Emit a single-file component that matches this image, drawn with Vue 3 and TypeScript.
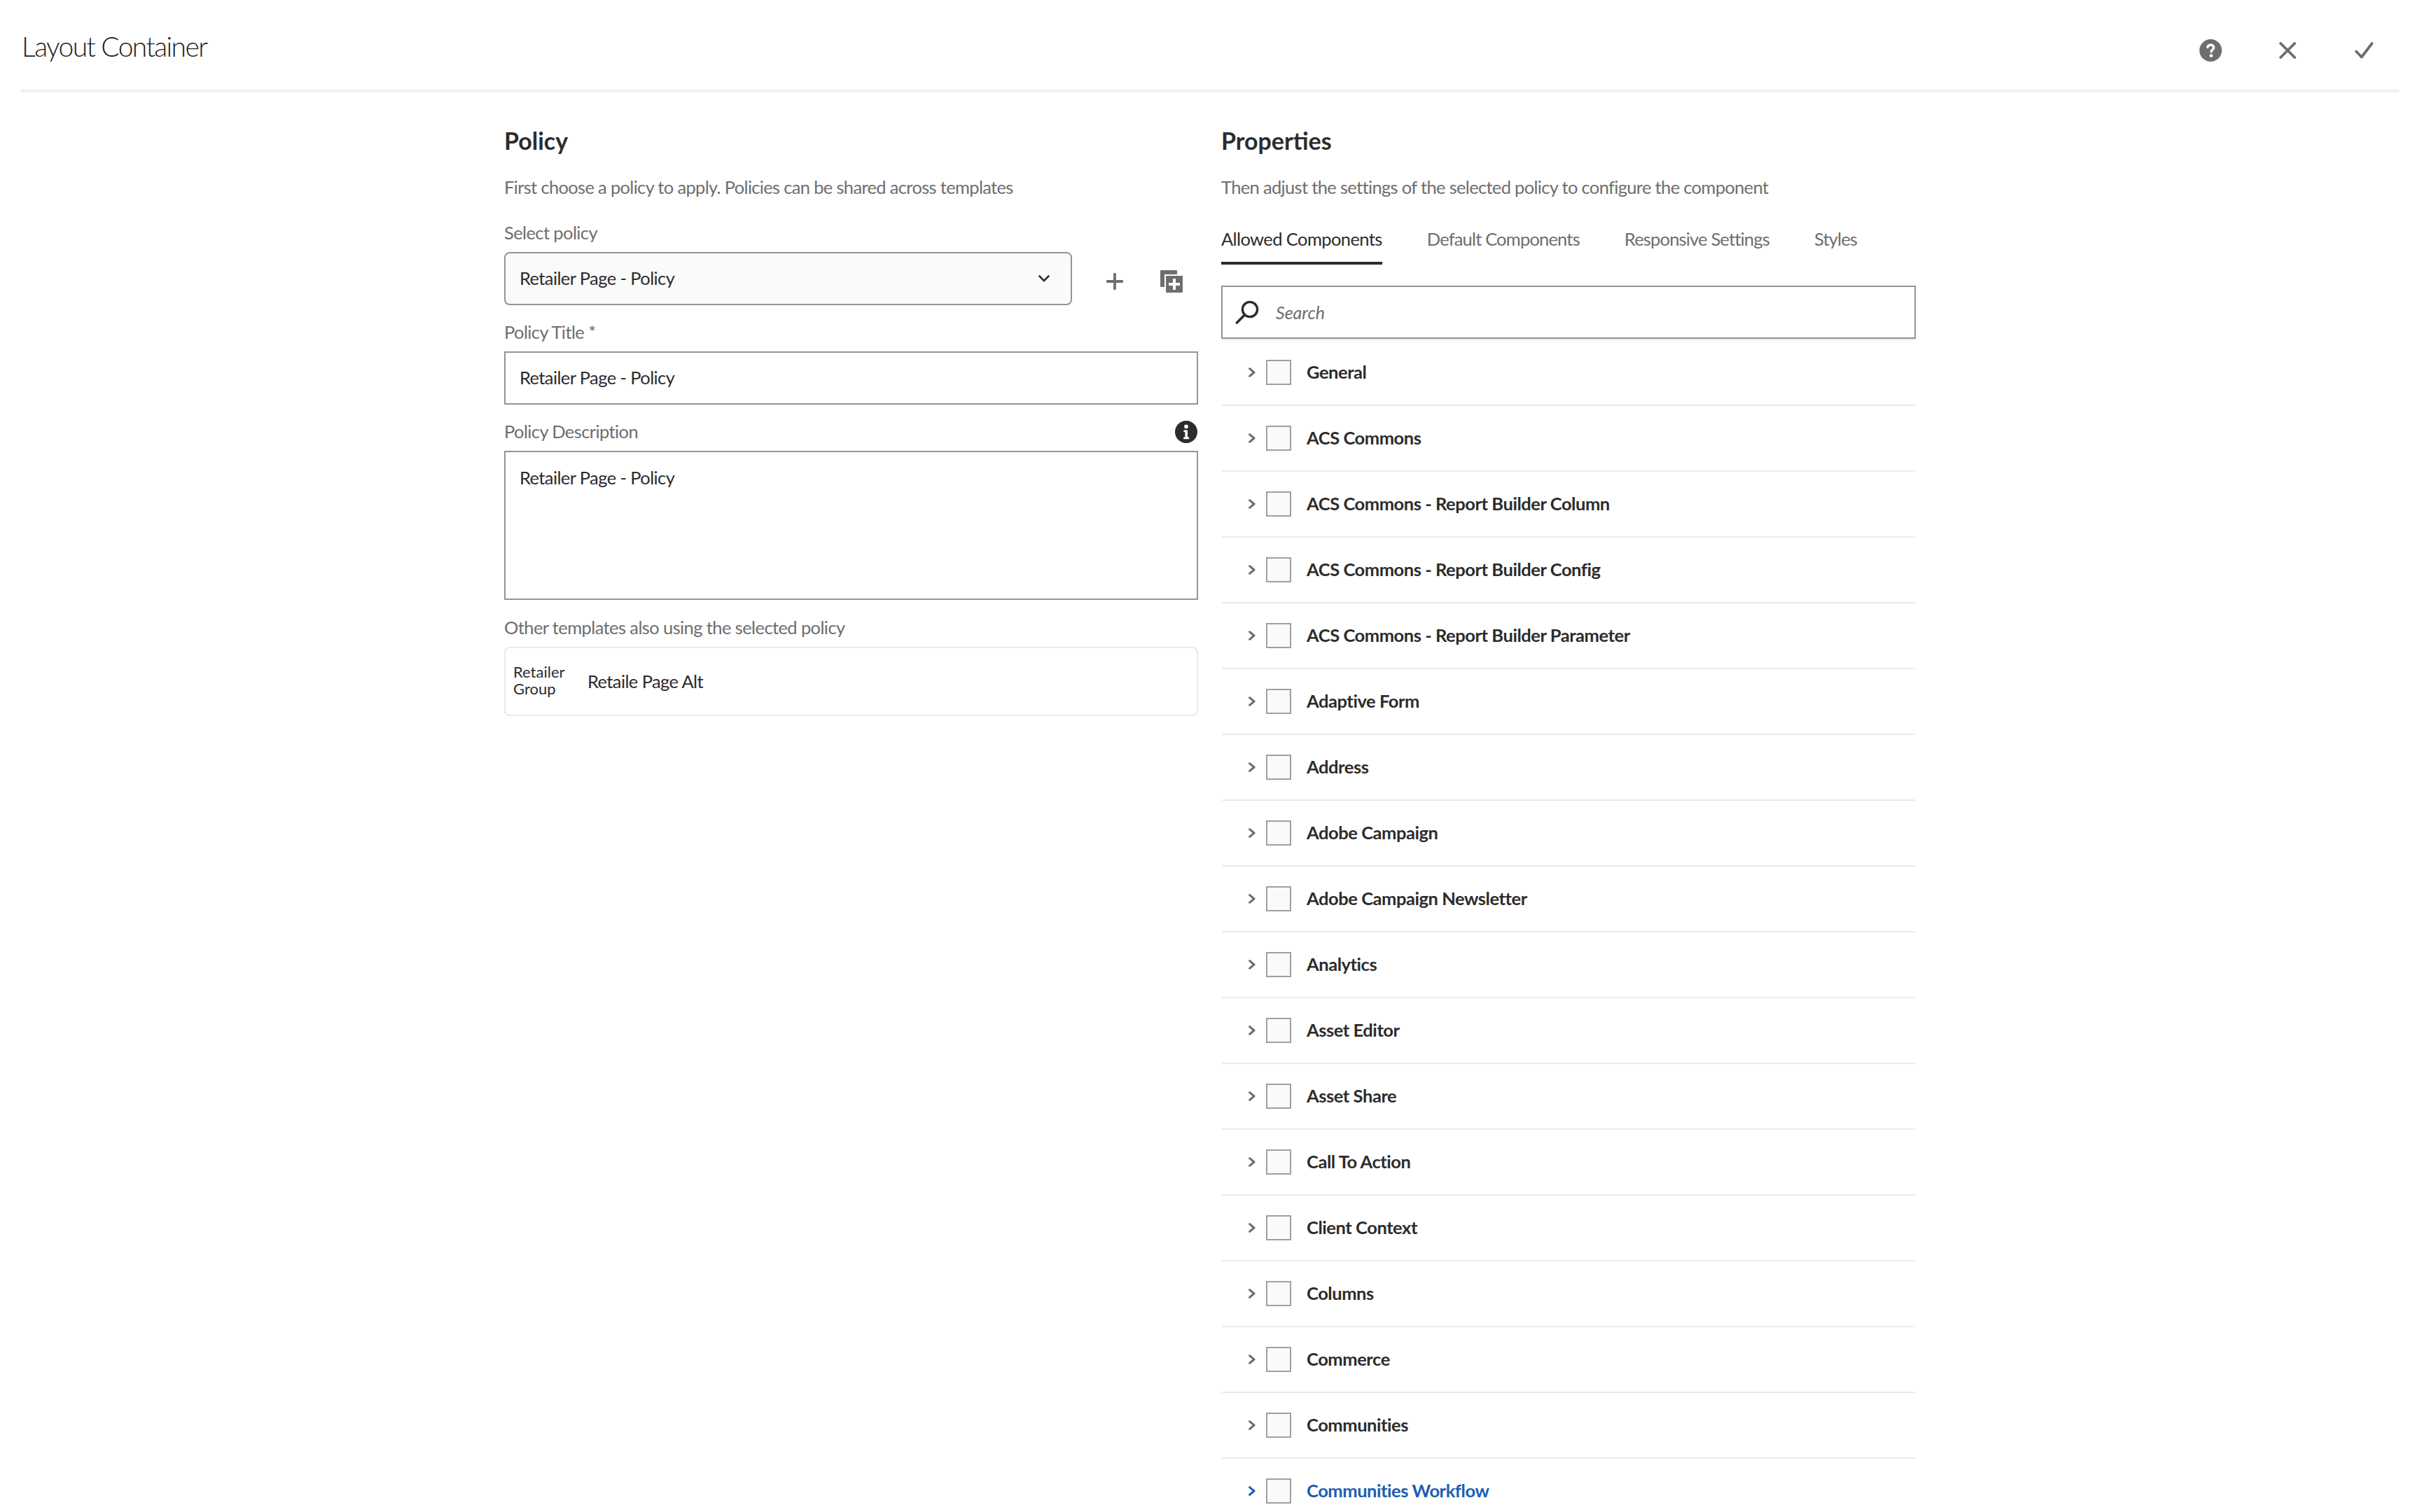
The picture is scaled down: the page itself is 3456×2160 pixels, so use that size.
<script setup lang="ts">
const tabs: string[] = ['Allowed Components', 'Default Components', 'Responsive Settings', 'Styles']
const groups: string[] = [
  'General', 'ACS Commons', 'ACS Commons - Report Builder Column', 'ACS Commons - Report Builder Config',
  'ACS Commons - Report Builder Parameter', 'Adaptive Form', 'Address', 'Adobe Campaign',
  'Adobe Campaign Newsletter', 'Analytics', 'Asset Editor', 'Asset Share', 'Call To Action',
  'Client Context', 'Columns', 'Commerce', 'Communities', 'Communities Workflow'
]
</script>

<template>
  <div class="page">
    <header class="topbar">
      <h1 class="title">Layout Container</h1>
      <div class="actions">
        <svg class="ic-help" viewBox="0 0 32 32" aria-label="Help">
          <circle cx="16" cy="16" r="16" fill="#6e6e6e" />
          <path d="M11.6 11.6c.4-2.2 2.2-3.4 4.5-3.4 2.6 0 4.4 1.5 4.4 3.7 0 3-3.6 3.2-3.6 6" fill="none" stroke="#fff" stroke-width="3.4" stroke-linecap="round" />
          <circle cx="16.8" cy="23.6" r="2.4" fill="#fff" />
        </svg>
        <svg class="ic-close" viewBox="0 0 24 24" aria-label="Close">
          <path d="M2 2l20 20M22 2L2 22" fill="none" stroke="#6e6e6e" stroke-width="3.8" stroke-linecap="round" />
        </svg>
        <svg class="ic-check" viewBox="0 0 26 24" aria-label="Done">
          <path d="M2 13.5l7.6 8L24.5 2" fill="none" stroke="#6e6e6e" stroke-width="3.8" stroke-linecap="round" stroke-linejoin="round" />
        </svg>
      </div>
    </header>

    <main class="columns">
      <section class="col">
        <h2 class="heading">Policy</h2>
        <p class="desc">First choose a policy to apply. Policies can be shared across templates</p>

        <div class="label first-label">Select policy</div>
        <div class="select-row">
          <div class="select">
            <span class="value">Retailer Page - Policy</span>
            <svg class="ic-down" viewBox="0 0 16 10">
              <path d="M1.5 1.5L8 8.2l6.5-6.7" fill="none" stroke="#2c2c2c" stroke-width="2.6" stroke-linecap="round" stroke-linejoin="round" />
            </svg>
          </div>
          <svg class="ic-plus" viewBox="0 0 24 24" aria-label="Add">
            <path d="M12 1.5v21M1.5 12h21" fill="none" stroke="#6e6e6e" stroke-width="3.8" stroke-linecap="round" />
          </svg>
          <svg class="ic-copy" viewBox="0 0 32 32" aria-label="Duplicate">
            <path d="M1 0h22a1 1 0 0 1 1 1v5H7a1 1 0 0 0-1 1v17H1a1 1 0 0 1-1-1V1a1 1 0 0 1 1-1z" fill="#6e6e6e" />
            <rect x="8" y="8" width="24" height="24" rx="1" fill="#6e6e6e" />
            <path d="M20 12v16M12 20h16" stroke="#fff" stroke-width="4" fill="none" />
          </svg>
        </div>

        <div class="label">Policy Title *</div>
        <div class="field"><span class="value">Retailer Page - Policy</span></div>

        <div class="label label-row">
          <span>Policy Description</span>
          <svg class="ic-info" viewBox="0 0 32 32" aria-label="Info">
            <circle cx="16" cy="16" r="16" fill="#2c2c2c" />
            <circle cx="16" cy="8.4" r="2.8" fill="#fff" />
            <path d="M12.4 13.4h5.6v10h2.2v2.8h-8v-2.8h2.2v-7.2h-2z" fill="#fff" />
          </svg>
        </div>
        <div class="field area"><span class="value">Retailer Page - Policy</span></div>

        <div class="label other-label">Other templates also using the selected policy</div>
        <div class="template-card">
          <div class="group-name">Retailer<br />Group</div>
          <div class="template-name">Retaile Page Alt</div>
        </div>
      </section>

      <section class="col">
        <h2 class="heading">Properties</h2>
        <p class="desc">Then adjust the settings of the selected policy to configure the component</p>

        <nav class="tabs">
          <span v-for="(t, i) in tabs" :key="t" class="tab" :class="{ active: i === 0 }">{{ t }}</span>
        </nav>

        <div class="search">
          <svg class="ic-search" viewBox="0 0 34 34">
            <circle cx="21" cy="13" r="10.6" fill="none" stroke="#2c2c2c" stroke-width="3.4" />
            <path d="M13.4 21L2.4 32" fill="none" stroke="#2c2c2c" stroke-width="3.6" stroke-linecap="round" />
          </svg>
          <span class="placeholder">Search</span>
        </div>

        <ul class="list">
          <li v-for="g in groups" :key="g" class="row" :class="{ hover: g === 'Communities Workflow' }">
            <svg class="ic-right" viewBox="0 0 10 14">
              <path d="M1.6 1.6L8 7l-6.4 5.4" fill="none" stroke="currentColor" stroke-width="3" stroke-linecap="round" stroke-linejoin="round" />
            </svg>
            <span class="box"></span>
            <span class="row-label">{{ g }}</span>
          </li>
        </ul>
      </section>
    </main>
  </div>
</template>

<style>
html, body { margin: 0; overflow: hidden; background: #fff; }
</style>

<style scoped>
.page {
  width: 3456px;
  height: 2160px;
  overflow: hidden;
  background: #fff;
  font-family: Lato, "Noto Sans", sans-serif;
  color: #2c2c2c;
}
.topbar {
  height: 128px;
  margin: 0 30px;
  border-bottom: 4px solid #f0f0f0;
  display: flex;
  align-items: center;
  justify-content: space-between;
}
.title {
  margin: 4px 0 0;
  font-size: 39px;
  font-weight: 300;
  line-height: 48px;
  letter-spacing: -1.6px;
  color: #222;
  padding-left: 1px;
}
.actions { display: flex; align-items: center; margin: 16px 37px 0 0; }
.ic-help { width: 32px; height: 32px; }
.ic-close { width: 24px; height: 24px; margin-left: 82px; }
.ic-check { width: 26px; height: 24px; margin-left: 84px; }

.columns { display: flex; gap: 33px; padding-left: 720px; }
.col { width: 991px; flex: none; }
.col + .col { width: 992px; }
.heading { margin: 49px 0 0; font-size: 34px; line-height: 40px; font-weight: 700; color: #2c2c2c; }
.desc { margin: 30px 0 0; font-size: 25.5px; line-height: 32px; letter-spacing: -0.67px; color: #6e6e6e; }
.label { margin-top: 22px; font-size: 25.5px; line-height: 32px; letter-spacing: -0.6px; color: #6e6e6e; }
.first-label { margin-top: 33px; }
.other-label { margin-top: 23px; padding-bottom: 1px; }
.label-row { display: flex; justify-content: space-between; align-items: center; padding-right: 1px; }
.ic-info { width: 32px; height: 32px; transform: translateY(1px); }

.select-row { display: flex; align-items: center; margin-top: 12px; }
.select {
  box-sizing: border-box;
  width: 811px;
  height: 76px;
  padding: 0 20px;
  display: flex;
  align-items: center;
  justify-content: space-between;
  background: #fafafa;
  border: 2px solid #959595;
  border-radius: 8px;
}
.ic-down { width: 16px; height: 10px; margin-right: 10px; }
.ic-plus { width: 24px; height: 24px; margin: 8px 0 0 49px; }
.ic-copy { width: 32px; height: 32px; margin: 8px 0 0 53px; }
.field {
  box-sizing: border-box;
  height: 76px;
  margin-top: 12px;
  padding: 0 20px;
  display: flex;
  align-items: center;
  border: 2px solid #959595;
}
.area { height: 213px; align-items: flex-start; padding-top: 20px; }
.value { margin-bottom: 2px; font-size: 25.5px; line-height: 32px; letter-spacing: -0.6px; color: #2c2c2c; }
.template-card {
  box-sizing: border-box;
  height: 99px;
  margin-top: 11px;
  padding: 0 11px;
  display: flex;
  align-items: center;
  border: 2px solid #eaeaea;
  border-radius: 8px;
}
.group-name { width: 106px; margin-bottom: 3px; font-size: 22px; line-height: 24px; color: #2c2c2c; }
.template-name { margin-bottom: 2px; font-size: 25.5px; line-height: 32px; letter-spacing: -0.6px; color: #2c2c2c; }

.tabs { display: flex; gap: 64px; margin-top: 42px; }
.tab { padding-bottom: 17px; font-size: 25.5px; line-height: 32px; letter-spacing: -0.82px; color: #6e6e6e; border-bottom: 4px solid transparent; }
.tab.active { color: #2c2c2c; border-bottom-color: #2c2c2c; letter-spacing: -0.6px; }
.search {
  box-sizing: border-box;
  height: 76px;
  margin-top: 30px;
  padding: 0 0 0 18px;
  display: flex;
  align-items: center;
  border: 2px solid #959595;
}
.ic-search { width: 34px; height: 34px; }
.placeholder { margin-left: 24px; font-size: 25px; font-style: italic; color: #6e6e6e; }

.list { margin: 0 1px 0 1px; padding: 0; list-style: none; border-top: 2px solid #eaeaea; }
.row {
  box-sizing: border-box;
  height: 94px;
  padding-left: 38px;
  display: flex;
  align-items: center;
  border-bottom: 2px solid #eaeaea;
  color: #6e6e6e;
}
.ic-right { width: 10px; height: 14px; flex: none; }
.box {
  box-sizing: border-box;
  width: 36px;
  height: 36px;
  margin-left: 15px;
  background: #fafafa;
  border: 2px solid #a0a0a0;
  flex: none;
}
.row-label { margin: 0 0 2px 22px; font-size: 25.5px; line-height: 32px; letter-spacing: -0.45px; font-weight: 700; color: #2c2c2c; }
.row.hover { color: #1c5db3; }
.row.hover .row-label { color: #1c5db3; }
</style>
